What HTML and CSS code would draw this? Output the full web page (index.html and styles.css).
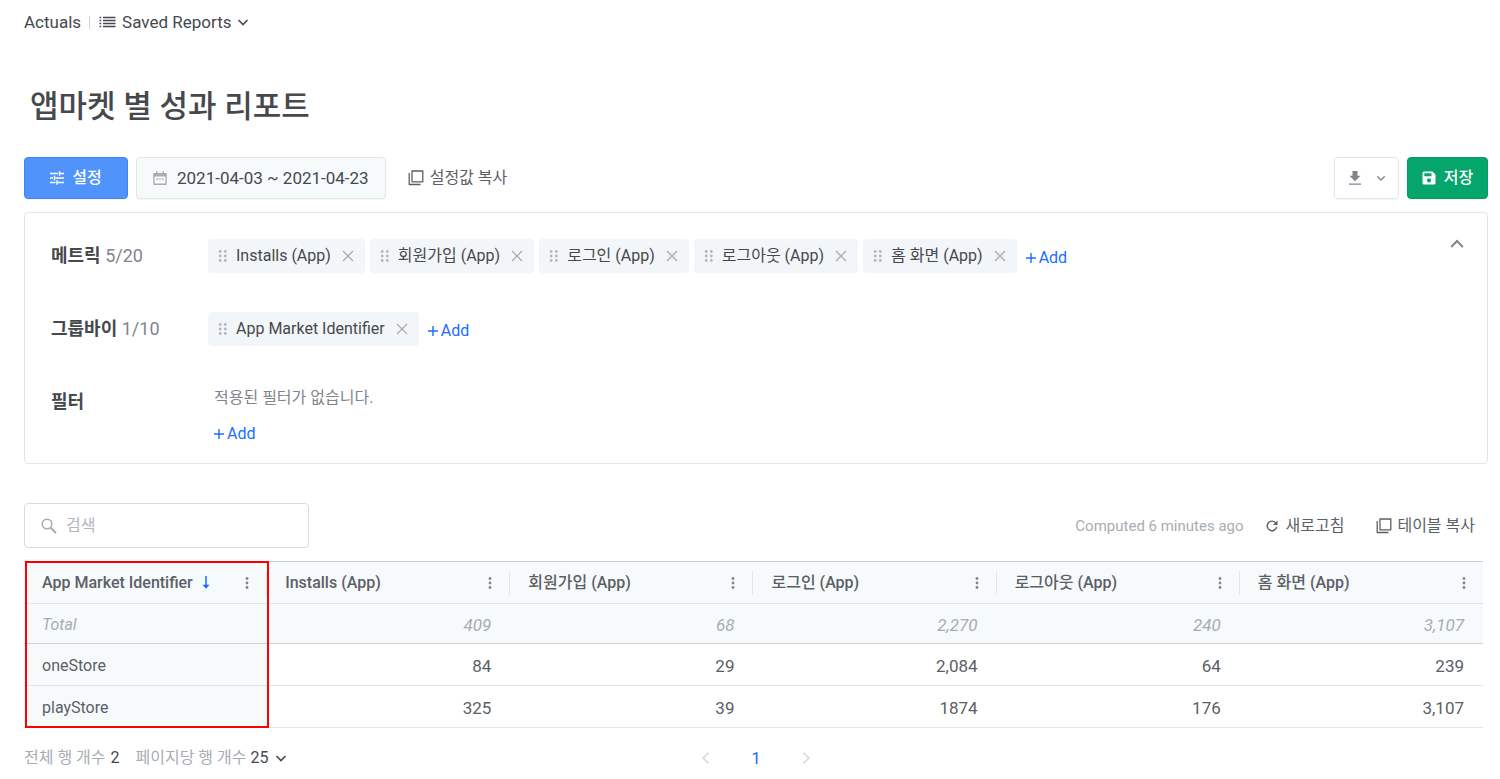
FILE: index.html
```html
<!DOCTYPE html>
<html lang="ko">
<head>
<meta charset="utf-8">
<meta name="viewport" content="width=device-width, initial-scale=1">
<title>앱마켓 별 성과 리포트</title>
<link rel="stylesheet" href="styles.css">
</head>
<body>
<svg class="sprite" aria-hidden="true">
  <symbol id="chevron" viewBox="0 0 12 12"><path d="M1.500 4 6 8.500 10.500 4" fill="none" stroke="currentColor" stroke-width="1.600"/></symbol>
  <symbol id="grip" viewBox="0 0 10 14"><g fill="currentColor"><circle cx="2.200" cy="2.500" r="1.400"/><circle cx="7.300" cy="2.500" r="1.400"/><circle cx="2.200" cy="7" r="1.400"/><circle cx="7.300" cy="7" r="1.400"/><circle cx="2.200" cy="11.500" r="1.400"/><circle cx="7.300" cy="11.500" r="1.400"/></g></symbol>
  <symbol id="close" viewBox="0 0 12 12"><path d="m1 1 10 10M11 1 1 11" fill="none" stroke="currentColor" stroke-width="1.300"/></symbol>
  <symbol id="plus" viewBox="0 0 10 10"><path d="M5 0v10M0 5h10" fill="none" stroke="currentColor" stroke-width="1.400"/></symbol>
  <symbol id="copy" viewBox="0 0 16 16"><path d="M4 1h10.800v10.800H4z" fill="none" stroke="currentColor" stroke-width="1.300" stroke-linejoin="round"/><path d="M1.200 3v11.500H12.500" fill="none" stroke="currentColor" stroke-width="1.300" stroke-linejoin="round"/></symbol>
  <symbol id="more" viewBox="0 0 4 14"><g fill="currentColor"><circle cx="2" cy="2.500" r="1.400"/><circle cx="2" cy="7" r="1.400"/><circle cx="2" cy="11.500" r="1.400"/></g></symbol>
</svg>

<nav class="crumbs">
  <a class="crumb-link" href="#">Actuals</a>
  <span class="crumb-divider"></span>
  <button class="saved" type="button">
    <svg class="icon-list" viewBox="0 0 17 12"><path d="M4 1.500h12.500M4 4.500h12.500M4 7.500h12.500M4 10.500h12.500" stroke="currentColor" stroke-width="1.300"/><path d="M.5 1.500h1.700M.5 4.500h1.700M.5 7.500h1.700M.5 10.500h1.700" stroke="currentColor" stroke-width="1.300"/></svg>
    Saved Reports
    <svg class="icon-12"><use href="#chevron"/></svg>
  </button>
</nav>

<main class="report">
  <h1 class="title">앱마켓 별 성과 리포트</h1>

  <div class="toolbar">
    <button class="btn btn-primary" type="button">
      <svg class="icon-14" viewBox="0 0 14 14"><path d="M0 2.500h8M10 2.500h4M9.500.3v4.400M0 7h3M5.500 7H14M4.500 4.800v4.400M0 11.500h5.500M7.500 11.500H14M7 9.300v4.400" fill="none" stroke="currentColor" stroke-width="1.400"/></svg>
      설정
    </button>
    <button class="btn btn-date" type="button">
      <svg class="icon-calendar" viewBox="0 0 14 15"><path d="M1 3h12v10.200H1z" fill="none" stroke="currentColor" stroke-width="1.400" stroke-linejoin="round"/><path d="M.5 2h13v3.500H.5zM3 .3h1.500V3H3zM9.500.3H11V3H9.500zM3.500 7.300H5v1.400H3.500zM6.300 7.300h1.400v1.400H6.300zM9 7.300h1.500v1.400H9z" fill="currentColor"/></svg>
      2021-04-03 ~ 2021-04-23
    </button>
    <button class="link-btn" type="button"><svg class="icon-16"><use href="#copy"/></svg>설정값 복사</button>
    <div class="toolbar-end">
      <button class="btn btn-download" type="button" aria-label="다운로드">
        <svg class="icon-14" viewBox="0 0 14 14"><path d="M4.500 0h5v4.800h3L7 10.300 1.500 4.800h3zM1 12.400h12v1.400H1z" fill="currentColor"/></svg>
        <svg class="icon-10"><use href="#chevron"/></svg>
      </button>
      <button class="btn btn-save" type="button">
        <svg class="icon-14" viewBox="0 0 14 14"><path fill="currentColor" fill-rule="evenodd" d="M2 .5h8.500L13.500 3.500V12a1.500 1.500 0 0 1-1.500 1.500H2A1.500 1.500 0 0 1 .5 12V2A1.500 1.500 0 0 1 2 .5zM2.300 2.300v2.900h7.200V2.300zM7 7.300a2.100 2.100 0 1 0 0 4.200 2.100 2.100 0 0 0 0-4.200z"/></svg>
        저장
      </button>
    </div>
  </div>

  <section class="settings">
    <div class="setting">
      <h2 class="setting-label">메트릭 <span class="count">5/20</span></h2>
      <div class="chips">
        <span class="chip"><svg class="icon-grip"><use href="#grip"/></svg>Installs (App)<button class="chip-x" type="button" aria-label="삭제"><svg class="icon-12"><use href="#close"/></svg></button></span>
        <span class="chip"><svg class="icon-grip"><use href="#grip"/></svg>회원가입 (App)<button class="chip-x" type="button" aria-label="삭제"><svg class="icon-12"><use href="#close"/></svg></button></span>
        <span class="chip"><svg class="icon-grip"><use href="#grip"/></svg>로그인 (App)<button class="chip-x" type="button" aria-label="삭제"><svg class="icon-12"><use href="#close"/></svg></button></span>
        <span class="chip"><svg class="icon-grip"><use href="#grip"/></svg>로그아웃 (App)<button class="chip-x" type="button" aria-label="삭제"><svg class="icon-12"><use href="#close"/></svg></button></span>
        <span class="chip"><svg class="icon-grip"><use href="#grip"/></svg>홈 화면 (App)<button class="chip-x" type="button" aria-label="삭제"><svg class="icon-12"><use href="#close"/></svg></button></span>
        <button class="add" type="button"><svg class="icon-10"><use href="#plus"/></svg>Add</button>
      </div>
      <button class="collapse" type="button" aria-label="접기"><svg class="icon-collapse" viewBox="0 0 14 10"><path d="m1.200 8 5.800-6 5.800 6" fill="none" stroke="currentColor" stroke-width="2"/></svg></button>
    </div>
    <div class="setting">
      <h2 class="setting-label">그룹바이 <span class="count">1/10</span></h2>
      <div class="chips">
        <span class="chip"><svg class="icon-grip"><use href="#grip"/></svg>App Market Identifier<button class="chip-x" type="button" aria-label="삭제"><svg class="icon-12"><use href="#close"/></svg></button></span>
        <button class="add" type="button"><svg class="icon-10"><use href="#plus"/></svg>Add</button>
      </div>
    </div>
    <div class="setting">
      <h2 class="setting-label">필터</h2>
      <div class="filters">
        <p class="filter-empty">적용된 필터가 없습니다.</p>
        <button class="add" type="button"><svg class="icon-10"><use href="#plus"/></svg>Add</button>
      </div>
    </div>
  </section>

  <div class="table-tools">
    <label class="search">
      <svg class="icon-16" viewBox="0 0 16 16"><circle cx="6" cy="6" r="4.800" fill="none" stroke="currentColor" stroke-width="1.600"/><path d="m9.700 9.700 5.300 5.300" stroke="currentColor" stroke-width="2"/></svg>
      <input class="search-input" type="search" placeholder="검색" aria-label="검색">
    </label>
    <div class="table-actions">
      <span class="computed">Computed 6 minutes ago</span>
      <button class="link-btn link-btn-refresh" type="button"><svg class="icon-12" viewBox="0 0 12 12"><path d="M10 3.200A4.800 4.800 0 1 0 10.700 7" fill="none" stroke="currentColor" stroke-width="1.400"/><path d="M11.500.5V5H7z" fill="currentColor"/></svg>새로고침</button>
      <button class="link-btn link-btn-copy" type="button"><svg class="icon-16"><use href="#copy"/></svg>테이블 복사</button>
    </div>
  </div>

  <div class="table-wrap">
    <table class="table">
      <thead>
        <tr>
          <th scope="col"><div class="head"><span>App Market Identifier</span><svg class="icon-sort" viewBox="0 0 8 13"><path d="M4 0v10" stroke="currentColor" stroke-width="1.500"/><path d="M.5 8.700h7L4 12.700z" fill="currentColor"/></svg><button class="more" type="button" aria-label="메뉴"><svg class="icon-more"><use href="#more"/></svg></button></div></th>
          <th scope="col"><div class="head"><span>Installs (App)</span><button class="more" type="button" aria-label="메뉴"><svg class="icon-more"><use href="#more"/></svg></button></div></th>
          <th scope="col"><div class="head"><span>회원가입 (App)</span><button class="more" type="button" aria-label="메뉴"><svg class="icon-more"><use href="#more"/></svg></button></div></th>
          <th scope="col"><div class="head"><span>로그인 (App)</span><button class="more" type="button" aria-label="메뉴"><svg class="icon-more"><use href="#more"/></svg></button></div></th>
          <th scope="col"><div class="head"><span>로그아웃 (App)</span><button class="more" type="button" aria-label="메뉴"><svg class="icon-more"><use href="#more"/></svg></button></div></th>
          <th scope="col"><div class="head"><span>홈 화면 (App)</span><button class="more" type="button" aria-label="메뉴"><svg class="icon-more"><use href="#more"/></svg></button></div></th>
        </tr>
      </thead>
      <tbody>
        <tr class="total"><td>Total</td><td>409</td><td>68</td><td>2,270</td><td>240</td><td>3,107</td></tr>
        <tr><td>oneStore</td><td>84</td><td>29</td><td>2,084</td><td>64</td><td>239</td></tr>
        <tr><td>playStore</td><td>325</td><td>39</td><td>1874</td><td>176</td><td>3,107</td></tr>
      </tbody>
    </table>
    <div class="highlight"></div>
  </div>

  <footer class="footer">
    <div class="footer-info">
      <span>전체 행 개수 <b class="strong">2</b></span>
      <label class="page-size">페이지당 행 개수
        <select class="page-select"><option>25</option><option>50</option></select>
        <svg class="icon-12"><use href="#chevron"/></svg>
      </label>
    </div>
    <div class="pager">
      <button class="page-btn" type="button" aria-label="이전"><svg class="icon-12" viewBox="0 0 12 12"><path d="M8.500.8 3 6l5.500 5.200" fill="none" stroke="currentColor" stroke-width="1.600"/></svg></button>
      <a class="page-current" href="#" aria-current="page">1</a>
      <button class="page-btn" type="button" aria-label="다음"><svg class="icon-12" viewBox="0 0 12 12"><path d="M3.500.8 9 6l-5.500 5.200" fill="none" stroke="currentColor" stroke-width="1.600"/></svg></button>
    </div>
  </footer>
</main>
</body>
</html>
```
FILE: styles.css
```css
:root {
  --text: #45494d;
  --text-mid: #5b6066;
  --muted: #7f868d;
  --faint: #a7adb4;
  --line: #e1e6ec;
  --line-strong: #c9d0d9;
  --tint: #f6fafb;
  --blue: #1a6dff;
}

* { box-sizing: border-box; }

body {
  margin: 0;
  background: #fff;
  color: var(--text);
  font: 16px/24px Roboto, "Noto Sans CJK KR", sans-serif;
}

button {
  display: inline-flex;
  align-items: center;
  padding: 0;
  border: 0;
  background: none;
  color: inherit;
  font: inherit;
  cursor: pointer;
}

a { color: inherit; text-decoration: none; }
svg { flex: none; }

.sprite { display: none; }
.icon-10 { width: 10px; height: 10px; }
.icon-12 { width: 12px; height: 12px; }
.icon-14 { width: 14px; height: 14px; }
.icon-16 { width: 16px; height: 16px; }
.icon-list { width: 17px; height: 12px; }
.icon-calendar { width: 14px; height: 15px; color: var(--faint); }
.icon-grip { width: 10px; height: 14px; color: #b1b7be; }
.icon-collapse { width: 14px; height: 10px; }
.icon-sort { width: 8px; height: 13px; color: var(--blue); }
.icon-more { width: 4px; height: 14px; }

.crumbs {
  display: flex;
  align-items: center;
  height: 44px;
  padding: 0 24px;
  font-size: 17px;
}
.crumb-divider {
  width: 1px;
  height: 13px;
  margin: 0 9px 0 8px;
  background: #cfd5dc;
}
.saved { gap: 6px; }

.report { padding: 0 12px 0 24px; }

.title {
  margin: 37px 0 25px;
  padding-left: 6px;
  font-size: 31px;
  line-height: 51px;
  font-weight: 500;
}

.toolbar { display: flex; align-items: center; }
.btn {
  justify-content: center;
  height: 42px;
  border: 1px solid var(--line);
  border-radius: 4px;
  box-shadow: 0 1px 1px #0000000a;
}
.btn-primary {
  gap: 8px;
  width: 104px;
  border-color: #3d85f5;
  background: #5094fb;
  color: #fff;
  font-weight: 500;
}
.btn-date {
  gap: 10px;
  margin-left: 8px;
  padding: 0 16px;
  background: var(--tint);
  font-size: 17px;
}
.link-btn { gap: 6px; color: var(--text-mid); }
.toolbar > .link-btn { margin-left: 22px; }
.toolbar-end { display: flex; gap: 8px; margin-left: auto; }
.btn-download { gap: 14px; width: 65px; color: var(--muted); }
.btn-save {
  gap: 8px;
  width: 81px;
  border-color: #079a61;
  background: #05a66b;
  color: #fff;
  font-weight: 500;
}

.settings {
  display: flex;
  flex-direction: column;
  gap: 39px;
  margin-top: 13px;
  padding: 26px 23px 16px 26px;
  border: 1px solid var(--line);
  border-radius: 4px;
}
.setting { display: flex; align-items: flex-start; }
.setting-label {
  width: 157px;
  margin: 0;
  font-size: 18px;
  line-height: 34px;
  font-weight: 700;
}
.count { color: var(--muted); font-weight: 400; }
.chips { display: flex; flex-wrap: wrap; gap: 5px; }
.chip {
  display: inline-flex;
  align-items: center;
  gap: 8px;
  height: 34px;
  padding: 0 11px 0 10px;
  border-radius: 4px;
  background: #f3f6f9;
}
.chip-x { margin-left: 3px; color: var(--faint); }
.add { gap: 3px; color: var(--blue); }
.chips .add { margin-left: 4px; padding-top: 4px; }
.collapse { margin-left: auto; color: var(--muted); }
.filters {
  display: flex;
  flex-direction: column;
  align-items: flex-start;
  gap: 10px;
  padding-left: 6px;
  line-height: 26px;
}
.filter-empty { margin: 0; color: var(--muted); }

.table-tools {
  display: flex;
  justify-content: space-between;
  align-items: center;
  margin-top: 39px;
  padding-right: 13px;
}
.search {
  display: flex;
  align-items: center;
  gap: 9px;
  width: 285px;
  height: 45px;
  padding: 0 16px;
  border: 1px solid #d6dce4;
  border-radius: 4px;
  color: var(--faint);
}
.search-input {
  flex: 1;
  min-width: 0;
  padding: 0;
  border: 0;
  outline: 0;
  background: none;
  color: var(--text);
  font: inherit;
}
.search-input::placeholder { color: #b0b6bd; }
.table-actions { display: flex; align-items: center; }
.computed { margin-right: 22px; color: var(--faint); font-size: 15px; }
.link-btn-refresh { gap: 8px; }
.link-btn-copy { gap: 5px; margin-left: 32px; }

.table-wrap { position: relative; margin: 13px 5px 0 0; }
.table {
  width: 100%;
  border-spacing: 0;
  table-layout: fixed;
  color: var(--text-mid);
}
.table th, .table td {
  height: 42px;
  padding: 0 19px 0 18px;
  border-bottom: 1px solid var(--line);
  text-align: right;
}
.table td { padding-top: 2px; font-size: 17px; }
.table th {
  height: 43px;
  padding: 0;
  border-top: 1px solid var(--line-strong);
  background: var(--tint);
  font-weight: 500;
}
.table td:first-child {
  background: var(--tint);
  font-size: 16px;
  text-align: left;
}
.table .total td {
  height: 40px;
  padding-top: 3px;
  border-bottom-color: var(--line-strong);
  background: var(--tint);
  color: var(--faint);
  font-style: italic;
}
.head {
  display: flex;
  align-items: center;
  gap: 9px;
  height: 24px;
  padding: 0 17px 0 18px;
  border-right: 1px solid var(--line);
}
th:last-child .head { border-right: 0; }
.more { margin-left: auto; color: var(--muted); }
.highlight {
  position: absolute;
  inset: 0 auto 0 1px;
  width: calc(100% / 6 + 1px);
  border: 2px solid #f00;
  pointer-events: none;
}

.footer {
  display: grid;
  grid-template-columns: 1fr auto 1fr;
  align-items: center;
  height: 51px;
  padding-top: 9px;
}
.footer-info { display: flex; gap: 16px; color: var(--faint); }
.strong { margin-left: 1px; color: var(--text); font-weight: 400; }
.page-size { display: flex; align-items: center; color: var(--faint); }
.page-select {
  width: 19px;
  margin: 0 5px 0 4px;
  padding: 0;
  border: 0;
  appearance: none;
  background: none;
  color: var(--text);
  font: inherit;
}
.page-size svg { color: var(--text); }
.pager { display: flex; align-items: center; gap: 39px; }
.page-btn { color: #d3d9e0; }
.page-current { color: var(--blue); font-size: 17px; }
```
